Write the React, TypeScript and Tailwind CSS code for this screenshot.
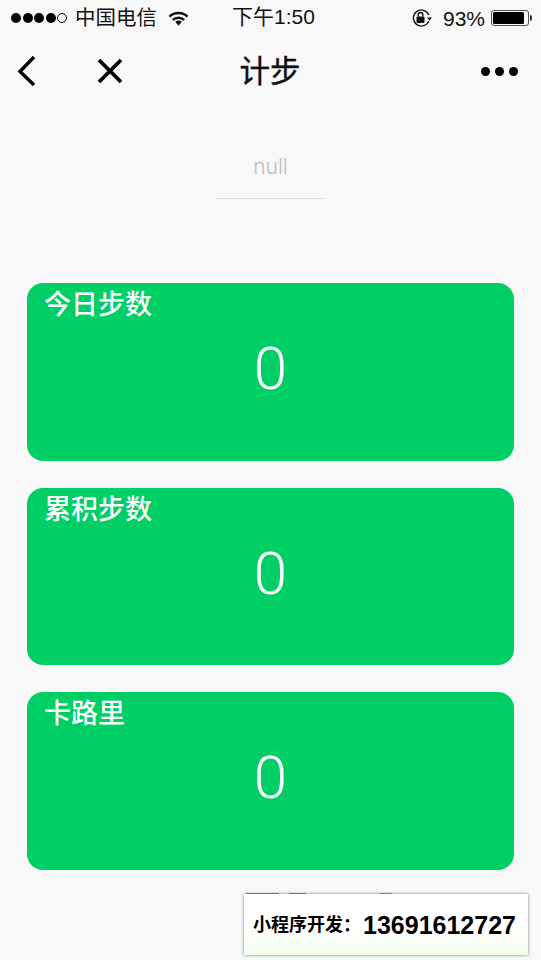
import React from "react";

const Card = ({ title }: { title: string }) => (
  <div className="h-[177.5px] rounded-[16px] bg-[#00cf65] text-white">
    <div className="pl-[17px] pt-[4px] text-[27px] leading-[36px] font-medium">{title}</div>
    <div
      className="mt-[11px] text-center text-[60px] leading-[70px] font-light"
      style={{ fontFamily: "Roboto, sans-serif" }}
    >
      0
    </div>
  </div>
);

const StatusBar = () => (
  <div className="relative flex h-[36px] items-center text-[#111] text-[21px]">
    <div className="ml-[11px] flex items-center gap-[1.5px]">
      <span className="h-[10px] w-[10px] rounded-full bg-black" />
      <span className="h-[10px] w-[10px] rounded-full bg-black" />
      <span className="h-[10px] w-[10px] rounded-full bg-black" />
      <span className="h-[10px] w-[10px] rounded-full bg-black" />
      <span className="h-[10px] w-[10px] rounded-full border border-black" />
    </div>
    <span className="ml-[8px] text-[20.5px] leading-none">中国电信</span>
    <svg className="ml-[11px]" width="21" height="17" viewBox="0 0 22 16">
      <path d="M1.5 6 A14 14 0 0 1 20.5 6" fill="none" stroke="#111" strokeWidth="2.6" />
      <path d="M5 9.5 A9 9 0 0 1 17 9.5" fill="none" stroke="#111" strokeWidth="2.6" />
      <path d="M7.5 11.5 A5.5 5.5 0 0 1 14.5 11.5 L11 15.5 Z" fill="#111" />
    </svg>
    <span className="absolute left-[232px] top-[4px] leading-[26px]">下午1:50</span>
    <div className="ml-auto mr-[9px] flex items-center">
      <svg width="22" height="20" viewBox="0 0 22 20">
        <path d="M17.8 7 A8 8 0 1 0 17.8 13" fill="none" stroke="#111" strokeWidth="1.3" />
        <path d="M16 9.5 L21 9.5 L18.5 12.5 Z" fill="#111" />
        <rect x="5.5" y="8.5" width="8" height="6.5" rx="1" fill="#111" />
        <path d="M7.2 8.5 V6.8 A2.3 2.3 0 0 1 11.8 6.8 V8.5" fill="none" stroke="#111" strokeWidth="1.4" />
      </svg>
      <span className="ml-[10px] leading-none">93%</span>
      <div className="ml-[6px] h-[16px] w-[38px] rounded-[3px] border border-[#555] p-[1px]">
        <div className="h-full w-[92%] rounded-[1.5px] bg-black" />
      </div>
      <span className="ml-[1px] h-[6px] w-[2px] rounded-r-full bg-[#333]" />
    </div>
  </div>
);

const NavBar = () => (
  <div className="relative flex h-[70px] items-center justify-center">
    <svg className="absolute left-[17px] top-[18px]" width="20" height="34" viewBox="0 0 20 34">
      <path d="M17 3 L3 17.5 L17 31" fill="none" stroke="#000" strokeWidth="3.4" />
    </svg>
    <svg className="absolute left-[96px] top-[21px]" width="28" height="28" viewBox="0 0 28 28">
      <path d="M3 3 L25 25 M25 3 L3 25" fill="none" stroke="#000" strokeWidth="3.8" />
    </svg>
    <span className="-ml-[1px] text-[30.5px] leading-none text-[#111] [-webkit-text-stroke:0.4px_#111]">计步</span>
    <div className="absolute right-[23px] top-[31px] flex gap-[5px]">
      <span className="h-[9px] w-[9px] rounded-full bg-black" />
      <span className="h-[9px] w-[9px] rounded-full bg-black" />
      <span className="h-[9px] w-[9px] rounded-full bg-black" />
    </div>
  </div>
);

export default function App() {
  return (
    <div
      className="relative h-[960px] w-[541px] overflow-hidden bg-[#f8f8f8]"
      style={{ fontFamily: '"Liberation Sans", "Noto Sans CJK SC", sans-serif' }}
    >
      <StatusBar />
      <NavBar />
      <div
        className="mx-auto mt-[42px] h-[51px] w-[109px] border-b border-[#dcdcdc] text-center text-[21px] leading-[38px] font-light text-[#bdbdbd]"
        style={{ fontFamily: "Inter, sans-serif" }}
      >
        null
      </div>
      <div className="mx-[27px] mt-[84px] flex flex-col gap-[27px]">
        <Card title="今日步数" />
        <Card title="累积步数" />
        <Card title="卡路里" />
      </div>
      <div className="absolute left-[246px] top-[892.5px] h-[1.5px] w-[33px] bg-[#3fae94]" />
      <div className="absolute left-[289px] top-[892.5px] h-[1.5px] w-[17px] bg-[#4ab39a]" />
      <div className="absolute left-[380px] top-[892.5px] h-[1.5px] w-[12px] bg-[#8fb565]" />
      <div className="absolute left-[244px] top-[894px] flex h-[61px] w-[284px] items-center justify-between bg-gradient-to-b from-white from-60% to-[#f3fdea] pl-[9px] pr-[12px] pt-[2px] text-black shadow-[0_0_3px_rgba(0,0,0,0.5)]">
        <span className="text-[18px] font-bold">小程序开发：</span>
        <span className="text-[25px] font-bold leading-none">13691612727</span>
      </div>
    </div>
  );
}
